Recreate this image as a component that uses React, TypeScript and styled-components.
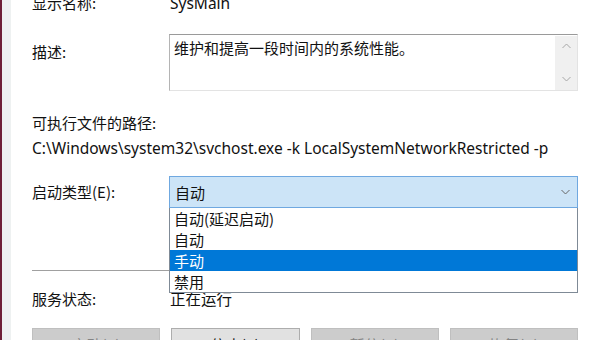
import styled, { createGlobalStyle } from "styled-components";

const GlobalStyle = createGlobalStyle`
  html, body {
    margin: 0;
    padding: 0;
    background: #ffffff;
    overflow: hidden;
  }
  body {
    font-family: "Noto Sans", "Noto Sans CJK SC", sans-serif;
    font-size: 15px;
    color: #111111;
  }
`;

const Frame = styled.div`
  width: 600px;
  height: 340px;
  display: flex;
  overflow: hidden;
`;

const EdgeLine = styled.div`
  width: 2px;
  background: #6e2038;
`;

const EdgeShade = styled.div`
  width: 9px;
  background: #eef1f1;
`;

const Dialog = styled.div`
  flex: 1;
  background: #ffffff;
  padding-left: 21px;
  padding-right: 22px;
  margin-top: -8px;
  display: flex;
  flex-direction: column;
`;

const Row = styled.div<{ $top?: number; $align?: string }>`
  display: grid;
  grid-template-columns: 137px 1fr;
  align-items: ${(p) => p.$align ?? "center"};
  margin-top: ${(p) => p.$top ?? 0}px;
`;

const Label = styled.span<{ $offset?: number }>`
  font-family: "Noto Sans CJK SC", "Noto Sans", sans-serif;
  line-height: 22px;
  white-space: nowrap;
  padding-top: ${(p) => p.$offset ?? 0}px;
`;

const Value = styled.span`
  font-family: "Noto Sans", "Noto Sans CJK SC", sans-serif;
  font-size: 15.5px;
  line-height: 22px;
  padding-left: 1px;
  white-space: nowrap;
`;

const TextBox = styled.div`
  height: 57px;
  box-sizing: border-box;
  border: 1px solid #e3e3e3;
  border-top: 1px solid #9a9a9a;
  border-left: 1px solid #b4b4b4;
  display: flex;
  justify-content: space-between;
`;

const TextBoxContent = styled.div`
  font-family: "Noto Sans CJK SC", sans-serif;
  padding: 2px 4px;
  line-height: 22px;
`;

const ScrollBar = styled.div`
  width: 22px;
  margin-top: 1px;
  background: #f0f0f0;
  display: flex;
  flex-direction: column;
  justify-content: space-between;
  align-items: center;
  padding: 7px 0 8px;
`;

const Block = styled.div<{ $top?: number; $latin?: boolean }>`
  margin-top: ${(p) => p.$top ?? 0}px;
  font-size: ${(p) => (p.$latin ? "15.5px" : "15px")};
  line-height: 22px;
  white-space: nowrap;
`;

const ComboWrap = styled.div`
  position: relative;
`;

const Combo = styled.div`
  height: 32px;
  box-sizing: border-box;
  background: #cce4f7;
  border: 1px solid #6fa8e0;
  display: flex;
  align-items: center;
  justify-content: space-between;
  padding: 0 7px 0 5px;
  font-family: "Noto Sans CJK SC", sans-serif;
`;

const DropList = styled.ul`
  position: absolute;
  top: 100%;
  left: 0;
  right: 0;
  margin: 0;
  padding: 0;
  list-style: none;
  background: #ffffff;
  border: 1px solid #7f8a96;
  border-top: none;
  z-index: 2;
`;

const DropItem = styled.li<{ $selected?: boolean }>`
  height: 21px;
  line-height: 21px;
  padding-left: 4px;
  font-family: "Noto Sans CJK SC", sans-serif;
  background: ${(p) => (p.$selected ? "#0078d7" : "transparent")};
  color: ${(p) => (p.$selected ? "#ffffff" : "#111111")};
`;

const Separator = styled.hr`
  margin: 62px 0 0;
  border: none;
  border-top: 1px solid #a0a0a0;
  height: 0;
`;

const ButtonRow = styled.div`
  display: grid;
  grid-template-columns: repeat(4, 1fr);
  gap: 11px;
  margin-top: 18px;
`;

const Button = styled.button<{ $enabled?: boolean }>`
  height: 33px;
  font-family: "Noto Sans CJK SC", sans-serif;
  font-size: 15px;
  background: ${(p) => (p.$enabled ? "#e1e1e1" : "#cccccc")};
  border: 1px solid ${(p) => (p.$enabled ? "#adadad" : "#bfbfbf")};
  color: ${(p) => (p.$enabled ? "#111111" : "#838383")};
  padding: 0;
`;

const Chevron = ({ up, color = "#a6a6a6" }: { up?: boolean; color?: string }) => (
  <svg width="9" height="6" viewBox="0 0 9 6">
    <path
      d={up ? "M0.5 5 L4.5 1 L8.5 5" : "M0.5 1 L4.5 5 L8.5 1"}
      fill="none"
      stroke={color}
      strokeWidth="1"
    />
  </svg>
);

const options = ["自动(延迟启动)", "自动", "手动", "禁用"];

export default function App() {
  return (
    <>
      <GlobalStyle />
      <Frame>
        <EdgeLine />
        <EdgeShade />
        <Dialog>
          <Row>
            <Label>显示名称:</Label>
            <Value>SysMain</Value>
          </Row>
          <Row $top={20} $align="start">
            <Label $offset={7}>描述:</Label>
            <TextBox>
              <TextBoxContent>维护和提高一段时间内的系统性能。</TextBoxContent>
              <ScrollBar>
                <Chevron up />
                <Chevron />
              </ScrollBar>
            </TextBox>
          </Row>
          <Block $top={21}>
            <Label>可执行文件的路径:</Label>
          </Block>
          <Block $top={3} $latin>
            C:\Windows\system32\svchost.exe -k LocalSystemNetworkRestricted -p
          </Block>
          <Row $top={17}>
            <Label>启动类型(E):</Label>
            <ComboWrap>
              <Combo>
                <span>自动</span>
                <Chevron color="#666666" />
              </Combo>
              <DropList>
                {options.map((o) => (
                  <DropItem key={o} $selected={o === "手动"}>
                    {o}
                  </DropItem>
                ))}
              </DropList>
            </ComboWrap>
          </Row>
          <Separator />
          <Row $top={17}>
            <Label>服务状态:</Label>
            <Value>正在运行</Value>
          </Row>
          <ButtonRow>
            <Button>启动(S)</Button>
            <Button $enabled>停止(T)</Button>
            <Button>暂停(P)</Button>
            <Button>恢复(R)</Button>
          </ButtonRow>
        </Dialog>
      </Frame>
    </>
  );
}
